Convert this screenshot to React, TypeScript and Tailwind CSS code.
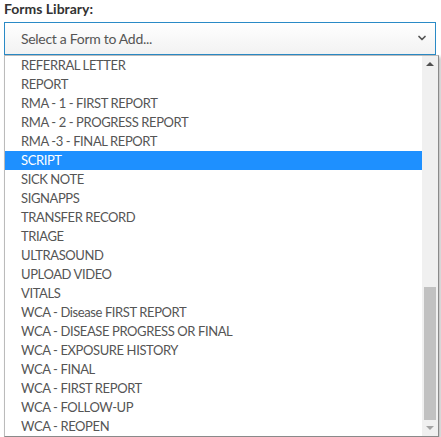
import { ChevronDown } from "lucide-react";

const forms = [
  "REFERRAL LETTER",
  "REPORT",
  "RMA - 1 - FIRST REPORT",
  "RMA - 2 - PROGRESS REPORT",
  "RMA -3 - FINAL REPORT",
  "SCRIPT",
  "SICK NOTE",
  "SIGNAPPS",
  "TRANSFER RECORD",
  "TRIAGE",
  "ULTRASOUND",
  "UPLOAD VIDEO",
  "VITALS",
  "WCA - Disease FIRST REPORT",
  "WCA - DISEASE PROGRESS OR FINAL",
  "WCA - EXPOSURE HISTORY",
  "WCA - FINAL",
  "WCA - FIRST REPORT",
  "WCA - FOLLOW-UP",
  "WCA - REOPEN",
];

export default function App() {
  return (
    <div className="h-[437px] w-[441px] overflow-hidden bg-white font-['Lato','Open_Sans',sans-serif]">
      <div className="pl-1">
        <label className="block h-[22px] pt-[1px] text-[14px] font-bold leading-[16px] text-[#333]">
          Forms Library:
        </label>
        <div className="flex h-[33px] w-[432px] items-center justify-between border border-[#2a8ac6] bg-gradient-to-b from-white to-[#f2f2f2] pb-[1px] pl-4 pr-[7px] text-[14px] tracking-[-0.3px] text-[#555]">
          <span>Select a Form to Add...</span>
          <ChevronDown className="h-[12px] w-[12px] text-[#555]" strokeWidth={3.5} />
        </div>
        <div className="flex h-[382px] w-[435px] border border-[#8a8a8a] border-t-[#bbb] border-l-[#bbb] bg-white shadow-[2px_2px_3px_rgba(0,0,0,0.25)]">
          <ul className="flex-1">
            {forms.map((f) => (
              <li
                key={f}
                className={
                  f === "SCRIPT"
                    ? "h-[19px] bg-[#1e90ff] pl-4 text-[13px] leading-[19px] tracking-[-0.4px] text-white"
                    : "h-[19px] pl-4 text-[13px] leading-[19px] tracking-[-0.4px] text-[#555]"
                }
              >
                {f}
              </li>
            ))}
          </ul>
          <div className="flex w-[16px] flex-col items-center bg-[#f0f0f0]">
            <div className="flex h-[16px] w-full items-center justify-center">
              <span className="h-0 w-0 border-x-[4px] border-b-[4px] border-x-transparent border-b-[#505050]" />
            </div>
            <div className="w-full flex-1" />
            <div className="h-[133px] w-[12px] bg-[#c1c1c1]" />
            <div className="flex h-[16px] w-full items-center justify-center">
              <span className="h-0 w-0 border-x-[4px] border-t-[4px] border-x-transparent border-t-[#a3a3a3]" />
            </div>
          </div>
        </div>
      </div>
    </div>
  );
}
